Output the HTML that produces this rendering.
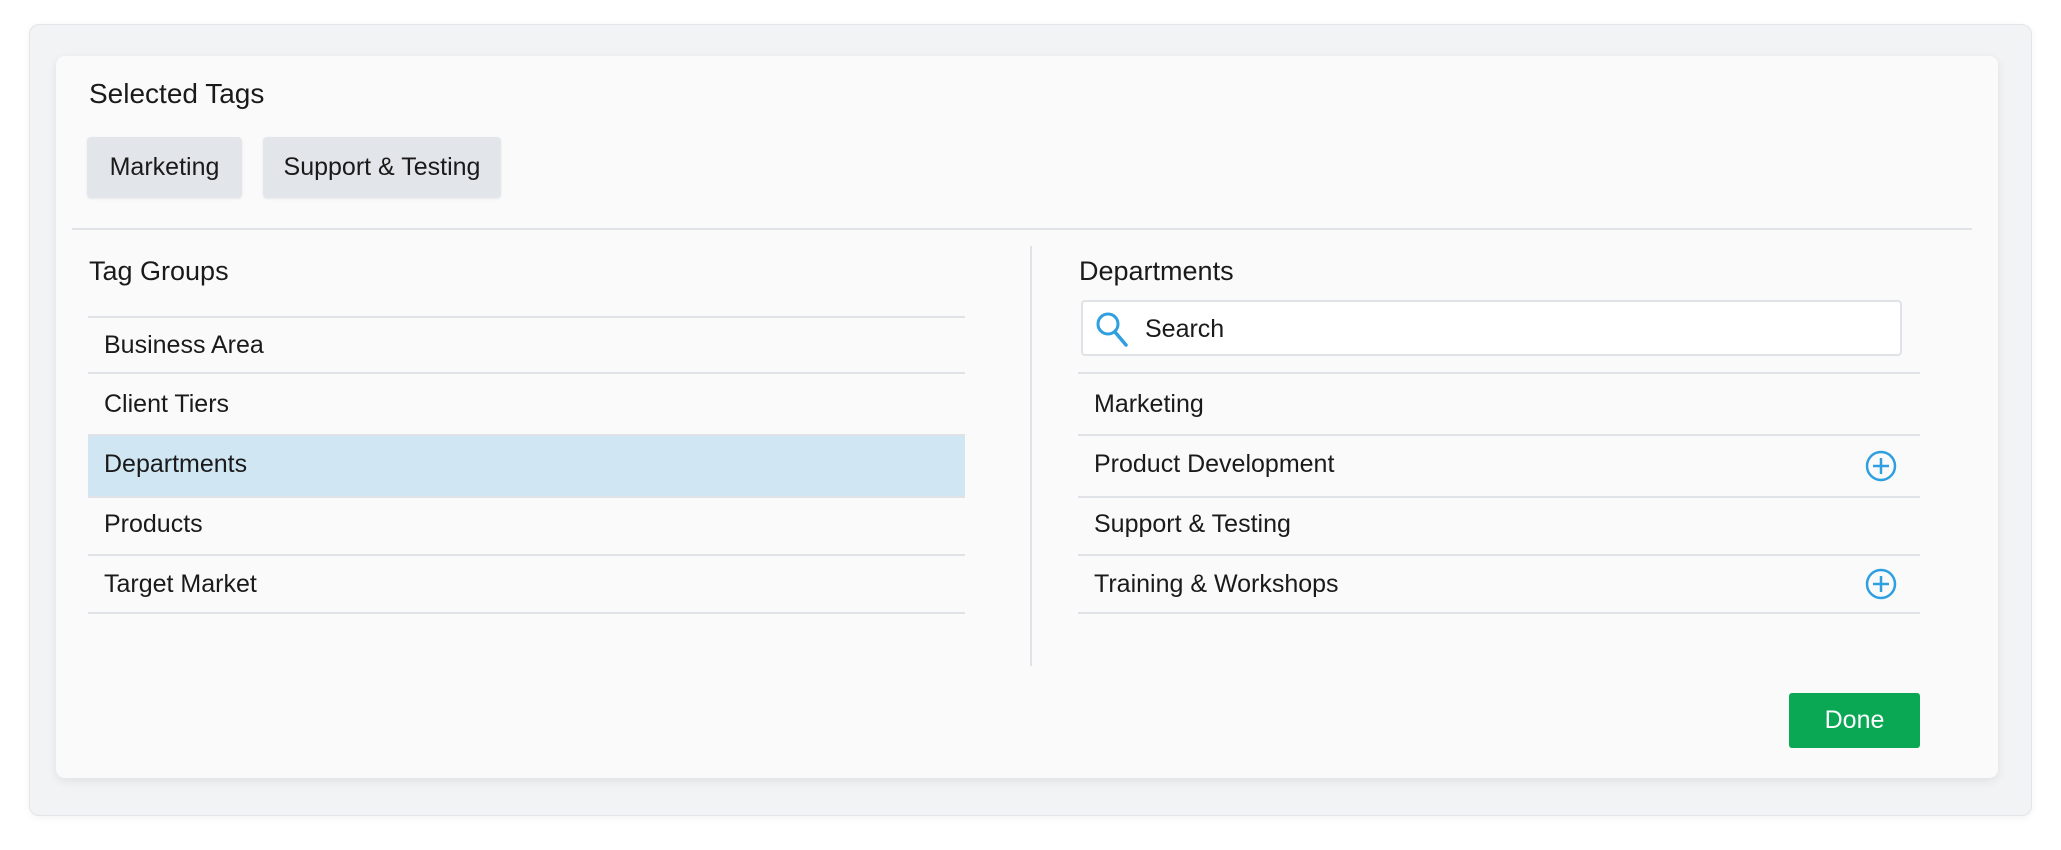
<!DOCTYPE html>
<html><head><meta charset="utf-8"><style>
*{margin:0;padding:0;box-sizing:border-box}
body{width:2061px;height:850px;background:#fff;font-family:"Liberation Sans",sans-serif;color:#1a1a1a;position:relative;overflow:hidden}
.outer{position:absolute;left:29px;top:24px;width:2003px;height:792px;background:#f2f3f5;border:1px solid #e3e5e8;border-radius:10px;box-shadow:0 2px 8px rgba(0,0,0,.05)}
.card{position:absolute;left:56px;top:56px;width:1942px;height:722px;background:#fafafa;border-radius:9px;box-shadow:0 3px 10px rgba(0,0,0,.08)}
.a{position:absolute;white-space:nowrap}
.h{font-size:28px}
.chip{position:absolute;top:137px;height:61px;background:#e2e5ea;border-radius:4px;font-size:25px;line-height:61px;text-align:center;box-shadow:0 1px 2px rgba(0,0,0,.08)}
.hl{position:absolute;height:2px;background:#dfe2e6}
.row{position:absolute;font-size:25px;line-height:30px}
.plus{position:absolute;width:32px;height:32px}
</style></head><body>
<div class="outer"></div>
<div class="card"></div>
<div class="a h" style="left:89px;top:78px">Selected Tags</div>
<div class="chip" style="left:87px;width:155px">Marketing</div>
<div class="chip" style="left:263px;width:238px">Support &amp; Testing</div>
<div class="hl" style="left:72px;top:228px;width:1900px"></div>
<div class="a" style="left:1030px;top:246px;width:2px;height:420px;background:#dfe2e6"></div>
<div class="a h" style="left:89px;top:256px;font-size:27px">Tag Groups</div>
<div class="a" style="left:88px;top:435px;width:877px;height:62px;background:#d0e6f3"></div>
<div class="hl" style="left:88px;top:316px;width:877px"></div>
<div class="hl" style="left:88px;top:372px;width:877px"></div>
<div class="hl" style="left:88px;top:434px;width:877px"></div>
<div class="hl" style="left:88px;top:496px;width:877px"></div>
<div class="hl" style="left:88px;top:554px;width:877px"></div>
<div class="hl" style="left:88px;top:612px;width:877px"></div>
<div class="row" style="left:104px;top:330px">Business Area</div>
<div class="row" style="left:104px;top:389px">Client Tiers</div>
<div class="row" style="left:104px;top:449px">Departments</div>
<div class="row" style="left:104px;top:509px">Products</div>
<div class="row" style="left:104px;top:569px">Target Market</div>
<div class="a h" style="left:1079px;top:256px;font-size:27px">Departments</div>
<div class="a" style="left:1081px;top:300px;width:821px;height:56px;background:#fff;border:2px solid #dfe2e6;border-radius:4px"></div>
<svg class="a" style="left:1094px;top:310px" width="36" height="38" viewBox="0 0 36 38"><circle cx="14" cy="14" r="10" fill="none" stroke="#2e9fe0" stroke-width="3"/><line x1="21" y1="22" x2="32" y2="35" stroke="#2e9fe0" stroke-width="3.5" stroke-linecap="round"/></svg>
<div class="row" style="left:1145px;top:314px">Search</div>
<div class="hl" style="left:1078px;top:372px;width:842px"></div>
<div class="hl" style="left:1078px;top:434px;width:842px"></div>
<div class="hl" style="left:1078px;top:496px;width:842px"></div>
<div class="hl" style="left:1078px;top:554px;width:842px"></div>
<div class="hl" style="left:1078px;top:612px;width:842px"></div>
<div class="row" style="left:1094px;top:389px">Marketing</div>
<div class="row" style="left:1094px;top:449px">Product Development</div>
<div class="row" style="left:1094px;top:509px">Support &amp; Testing</div>
<div class="row" style="left:1094px;top:569px">Training &amp; Workshops</div>
<svg class="plus" style="left:1865px;top:450px" viewBox="0 0 32 32"><circle cx="16" cy="16" r="14" fill="none" stroke="#2e9fe0" stroke-width="2.5"/><path d="M16 8v16M8 16h16" stroke="#2e9fe0" stroke-width="2.5"/></svg>
<svg class="plus" style="left:1865px;top:568px" viewBox="0 0 32 32"><circle cx="16" cy="16" r="14" fill="none" stroke="#2e9fe0" stroke-width="2.5"/><path d="M16 8v16M8 16h16" stroke="#2e9fe0" stroke-width="2.5"/></svg>
<div class="a" style="left:1789px;top:693px;width:131px;height:55px;background:#0aa854;border-radius:3px;color:#fff;font-size:25px;line-height:55px;text-align:center">Done</div>
</body></html>
